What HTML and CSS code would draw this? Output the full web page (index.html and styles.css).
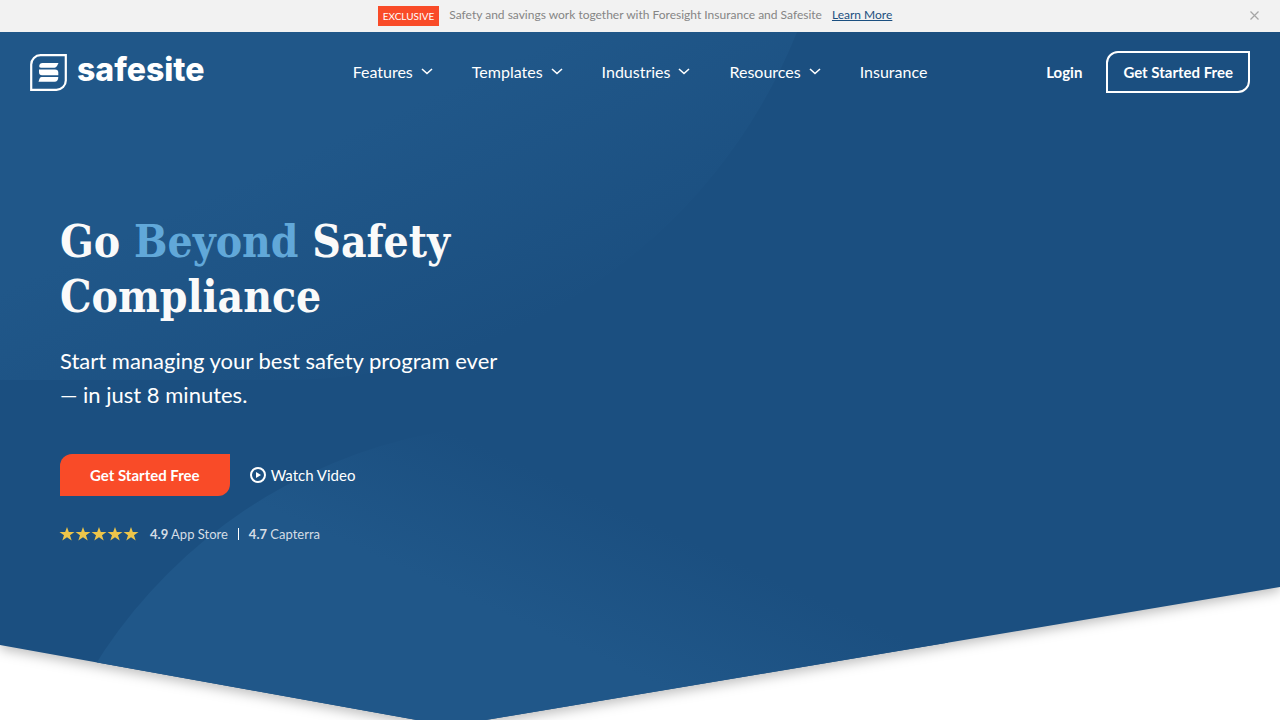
FILE: index.html
```
<!DOCTYPE html>
<html lang="en">

<head>
    <meta charset="UTF-8">
    <meta name="viewport" content="width=device-width, initial-scale=1.0">
    <title>Safesite | Go Beyond Safety Compliance</title>
    <link rel="stylesheet" href="styles.css">
</head>

<body>

    <div class="promo-bar">
        <span class="promo-tag">EXCLUSIVE</span>
        <span class="promo-text">Safety and savings work together with Foresight Insurance and Safesite</span>
        <a class="promo-link" href="#">Learn More</a>
        <button class="promo-close" type="button" aria-label="Close">
            <svg width="9" height="9" viewBox="0 0 9 9"><path d="M.5 .5l8 8M8.500 .5l-8 8" stroke="#a6a6a6" stroke-width="1.200" /></svg>
        </button>
    </div>

    <div class="hero">
        <!-- Angled background with the two soft circles -->
        <svg class="hero-bg" viewBox="0 0 1280 694" preserveAspectRatio="none" aria-hidden="true">
            <defs>
                <linearGradient id="fadeTop" gradientUnits="userSpaceOnUse" x1="397" y1="80" x2="500" y2="308">
                    <stop offset="0" stop-color="#205789" />
                    <stop offset="1" stop-color="#1b4f80" />
                </linearGradient>
                <linearGradient id="fadeBottom" gradientUnits="userSpaceOnUse" x1="520" y1="590" x2="580" y2="458">
                    <stop offset="0" stop-color="#205789" />
                    <stop offset="1" stop-color="#1b4f80" />
                </linearGradient>
                <clipPath id="heroShape">
                    <polygon points="0,0 1280,0 1280,555 450,694 0,613" />
                </clipPath>
            </defs>
            <g clip-path="url(#heroShape)">
                <rect width="1280" height="694" fill="#1b4f80" />
                <path d="M0 0H797A553 553 0 0 1 283 348H0Z" fill="url(#fadeTop)" />
                <circle cx="529" cy="903" r="511" fill="url(#fadeBottom)" />
            </g>
        </svg>

        <header class="header">
            <a class="logo" href="#" aria-label="safesite">
                <svg width="37" height="37" viewBox="0 0 37 37" aria-hidden="true">
                    <path d="M10.500 1.200H35.800V26.500A9.300 9.300 0 0 1 26.500 35.800H1.200V10.500A9.300 9.300 0 0 1 10.500 1.200Z" fill="none" stroke="#fff" stroke-width="2.200" />
                    <path d="M12.500 9H28.500L27 12Q26 13.800 24.500 13.800H11Q8.800 13.800 9.200 12Q9.500 9 12.500 9ZM9 15.500H25Q28.300 15.500 28.300 18.500V21.200H12Q9 21.200 9 18ZM11.500 23H28.300Q28.300 27.800 24.500 27.800H8.500L9.500 24.800Q10 23 11.500 23Z" fill="#fff" />
                </svg>
                <span class="logo-text">safesite</span>
            </a>

            <nav class="nav">
                <a href="#">Features <svg class="chevron" width="12" height="7" viewBox="0 0 12 7"><path d="M1 1l5 4.500L11 1" /></svg></a>
                <a href="#">Templates <svg class="chevron" width="12" height="7" viewBox="0 0 12 7"><path d="M1 1l5 4.500L11 1" /></svg></a>
                <a href="#">Industries <svg class="chevron" width="12" height="7" viewBox="0 0 12 7"><path d="M1 1l5 4.500L11 1" /></svg></a>
                <a href="#">Resources <svg class="chevron" width="12" height="7" viewBox="0 0 12 7"><path d="M1 1l5 4.500L11 1" /></svg></a>
                <a href="#">Insurance</a>
            </nav>

            <div class="account">
                <a class="login" href="#">Login</a>
                <a class="btn btn-outline" href="#">Get Started Free</a>
            </div>
        </header>

        <main class="content">
            <h1>Go <span class="highlight">Beyond</span> Safety Compliance</h1>
            <p class="lead">Start managing your best safety program ever — in just 8 minutes.</p>

            <div class="actions">
                <a class="btn btn-primary" href="#">Get Started Free</a>
                <a class="watch" href="#">
                    <svg width="16" height="16" viewBox="0 0 16 16" aria-hidden="true">
                        <circle cx="8" cy="8" r="7" fill="none" stroke="#fff" stroke-width="2" />
                        <path d="M6 5l5 3-5 3z" fill="#fff" />
                    </svg>
                    Watch Video
                </a>
            </div>

            <div class="ratings">
                <svg class="stars" width="79" height="14" viewBox="0 0 79 14" aria-label="5 stars">
                    <defs>
                        <path id="star" d="M7 0l1.800 5H14.500L10 8.200 11.700 13.600 7 10.300 2.300 13.600 4 8.200-.5 5h5.700z" />
                    </defs>
                    <g fill="#edc54a">
                        <use href="#star" />
                        <use href="#star" x="16" />
                        <use href="#star" x="32" />
                        <use href="#star" x="48" />
                        <use href="#star" x="64" />
                    </g>
                </svg>
                <span class="rating"><b>4.9</b> App Store</span>
                <span class="divider"></span>
                <span class="rating"><b>4.7</b> Capterra</span>
            </div>
        </main>
    </div>

</body>

</html>
```
FILE: styles.css
```
* {
    box-sizing: border-box;
}

body {
    margin: 0;
    background-color: #fff;
    color: #fff;
    font-family: Lato, "Liberation Sans", sans-serif;
}

a {
    color: inherit;
    text-decoration: none;
}

/* Promo bar */
.promo-bar {
    position: relative;
    display: flex;
    justify-content: center;
    align-items: center;
    gap: 10px;
    height: 32px;
    padding-right: 10px;
    background-color: #f2f2f2;
    color: #858585;
    font-size: 12px;
    line-height: 20px;
}

.promo-text,
.promo-link {
    padding-bottom: 2px;
}

.promo-tag {
    padding: 0 5px;
    background-color: #f94b28;
    color: #fff;
    font-size: 10px;
}

.promo-link {
    color: #1b4f80;
    text-decoration: underline;
}

.promo-close {
    position: absolute;
    top: 11px;
    right: 21px;
    display: flex;
    padding: 0;
    border: none;
    background: none;
    cursor: pointer;
}

/* Hero */
.hero {
    position: relative;
    min-height: 694px;
}

.hero-bg {
    position: absolute;
    top: 0;
    left: 0;
    z-index: -1;
    width: 100%;
    height: 100%;
    overflow: visible;
    filter: drop-shadow(0 4px 6px rgba(0, 0, 0, 0.25));
}

.header {
    display: grid;
    grid-template-columns: 1fr auto 1fr;
    align-items: center;
    height: 80px;
    padding: 0 30px;
}

.logo {
    display: flex;
    align-items: flex-start;
    gap: 10px;
}

.logo-text {
    font-family: Inter, "Liberation Sans", sans-serif;
    font-size: 32px;
    font-weight: 800;
    line-height: 32px;
}

.nav {
    display: flex;
    gap: 39px;
    padding-bottom: 2px;
    font-size: 16px;
}

.nav a {
    display: flex;
    align-items: center;
    gap: 8px;
}

.chevron {
    fill: none;
    stroke: #fff;
    stroke-width: 1.6;
}

.account {
    display: flex;
    justify-content: flex-end;
    align-items: center;
    gap: 24px;
}

.login,
.btn {
    font-size: 15px;
    font-weight: 700;
    line-height: 18px;
}

.btn {
    border-radius: 12px 0;
}

.btn-outline {
    padding: 10px 15px;
    border: 2px solid #fff;
}

.btn-primary {
    padding: 12px 30px;
    background-color: #f94b28;
}

.content {
    max-width: 570px;
    padding: 102px 60px 0;
}

h1 {
    margin: 0;
    color: #fafafa;
    font-family: "DejaVu Serif Condensed", "DejaVu Serif", serif;
    font-size: 44px;
    font-weight: 700;
    line-height: 55px;
}

.highlight {
    color: #61a8d9;
}

.lead {
    margin: 20px 0 42px;
    font-size: 22px;
    line-height: 34px;
}

.actions {
    display: flex;
    align-items: center;
    gap: 20px;
}

.watch {
    display: flex;
    align-items: center;
    gap: 5px;
    font-size: 15px;
}

.ratings {
    display: flex;
    align-items: center;
    margin-top: 30px;
    color: #d5dde5;
    font-size: 13px;
    line-height: 16px;
}

.stars {
    margin-right: 11px;
    overflow: visible;
}

.divider {
    width: 1px;
    height: 12px;
    margin: 0 10px;
    background-color: #fff;
}
```
